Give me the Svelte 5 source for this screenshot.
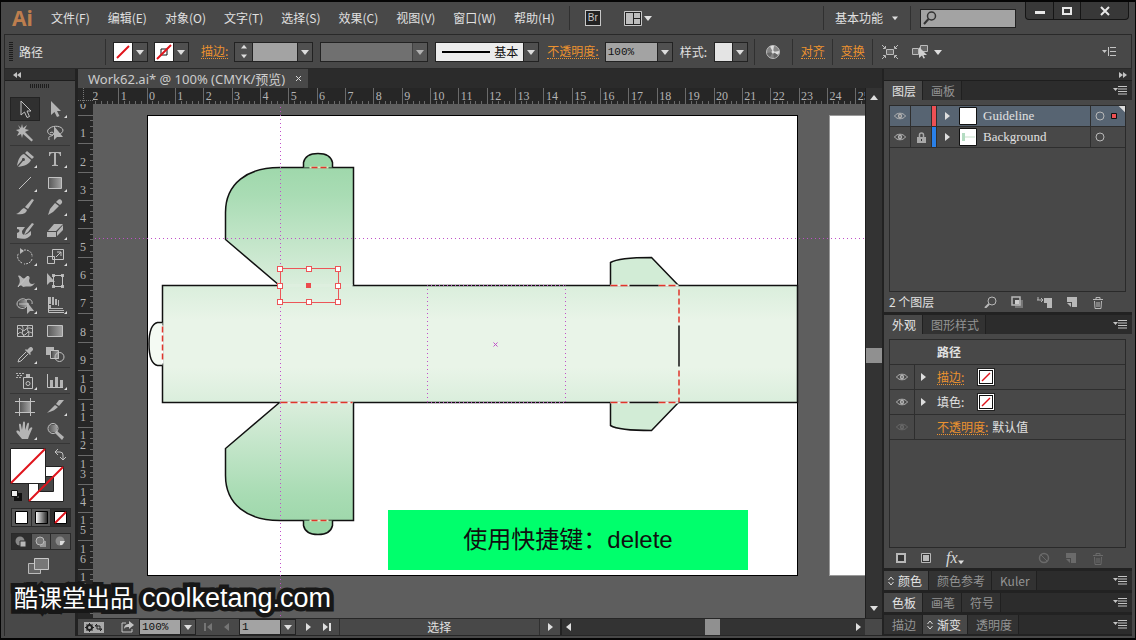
<script>
	const menus = ['文件(F)', '编辑(E)', '对象(O)', '文字(T)', '选择(S)', '效果(C)', '视图(V)', '窗口(W)', '帮助(H)'];

	// every icon lives in a 30x24 box: fill = solid shape, line = outline, more = has a flyout
	const toolGroups = [
		[
			{ name: '选择工具', line: 'M11 4v14l3.5-3 2.5 5.5 2.5-1-2.5-5.5h4z' },
			{ name: '直接选择工具', fill: 'M11 4v14l3.5-3 2.5 5 2.5-1-2.5-5h4z', more: true },
			{ name: '魔棒工具', fill: 'M12 3l1 4 4-3-2 4 4 1-4 2 8 8-1.500 1.500-8.500-7.500-1 4-1-4-4 2 2-4-3-2 4-1-2-4 3 3z' },
			{ name: '套索工具', line: 'M13 14c-6 0-7-5-3-7 4-3 12-2 13 2 0 2-2 4-4 4M10 12c2-2 5 0 3 2s-5 0-4 5', fill: 'M14 5v14l3-3h6z' }
		],
		[
			{ name: '钢笔工具', fill: 'M17 4l7 6-2 2-7-6zM14 7l7 6c-2 4-6 6-13 7l5-6a1.500 1.500 0 1 0-1-1l-5 6c1-6 3-11 7-12z', more: true },
			{ name: '文字工具', fill: 'M9 5h12v4h-1c0-2-1-3-3-3h-1v11c0 1 1 1 2 1v1h-6v-1c1 0 2 0 2-1V6h-1c-2 0-3 1-3 3H9z', more: true },
			{ name: '直线段工具', line: 'M9 18L21 6', more: true },
			{ name: '矩形工具', line: 'M8.500 6.500h13v11h-13z', shade: 'M9 7h12v10H9z', more: true },
			{ name: '画笔工具', fill: 'M22 4l2 1-6 9-3-2zM14 13l3 2c-1 4-5 5-11 4 4-1 5-5 8-6z' },
			{ name: '铅笔工具', fill: 'M18 5c2-2 5 1 4 3l-2 2-4-3zM15 8l4 3-6 6-5 3 2-6z', more: true },
			{ name: '斑点画笔工具', fill: 'M22 4l2 1-6 8-4 3 2-5zM7 8h8l-3 4c0 3 1 5 5 3l4-3v4c-4 5-9 4-14 3v-5l2-1c1-2 0-3-2-3z' },
			{ name: '橡皮擦工具', fill: 'M14 5h9l-7 7H8zM23 6v5l-6 6v-4zM7 13h9v5H7z', more: true }
		],
		[
			{ name: '旋转工具', line: 'M11 6c6-3 12 1 11 6M22 14c-1 4-5 5-8 5M12 18c-4-2-6-7-3-10', dash: true, fill: 'M10 3l4 3-4 3z', more: true },
			{ name: '比例缩放工具', line: 'M12.500 4.500h11v10h-11zM7.500 11.500h7v7h-7zM16 12l5-5m-4 0h4v4', more: true },
			{ name: '变形工具', fill: 'M8 7c3-2 4 4 7 2 3-4 6-1 4 2 0 4 3 5 6 3-4 6-8 2-12 4-2-3-5-1-6 0 3-3 4-7 1-11z', line: 'M8 18l10-11', more: true },
			{ name: '自由变换工具', line: 'M13.500 6.500h9v11h-9z', fill: 'M7 4v12l3-3h5zM12 5h3v3h-3zM21 5h3v3h-3zM21 16h3v3h-3zM12 16h3v3h-3z' },
			{ name: '形状生成器工具', line: 'M16 14c-3 3-9 1-9-3s6-7 9-4c3-2 7 0 6 4M9 11h10', shade: 'M9 7h8v7H9z', fill: 'M17 9v12l3-3h4z', more: true },
			{ name: '透视网格工具', fill: 'M8 4h3v7H8zM12 4h2v8h-2zM15 6h2v6h-2zM18 7h1v6h-1zM8 12h3v3h12v1H8zM8 17h16v1H8z', line: 'M8.500 4v15.500H24', more: true }
		],
		[
			{ name: '网格工具', line: 'M7.500 6.500h15v11h-15zM8 10c3-3 4 4 7 1s5-2 8-1M8 15c4-5 5 4 8 0s4-1 7-1M12 7c3 4-2 6 2 10M18 7c-3 4 3 6 0 10' },
			{ name: '渐变工具', line: 'M7.500 6.500h15v11h-15z', shade: 'M8 7h14v10H8z' },
			{ name: '吸管工具', fill: 'M19 5c2-3 6 1 3 3l-2 2 1 1-1 1-5-5 1-1 1 1z', line: 'M16 9l-7 7-1 3 3-1 7-7', more: true },
			{ name: '混合工具', fill: 'M6 4h8v3h-3v5H6z', shade: 'M12 8h7v8h-7z', line: 'M10.500 7.500h8v8h-8zM15 14a4.500 4.500 0 1 0 9 0a4.500 4.500 0 1 0-9 0' }
		],
		[
			{ name: '符号喷枪工具', line: 'M13.500 8.500h9v11h-9zM16 14.500a2 2 0 1 0 4 0a2 2 0 1 0-4 0', fill: 'M16 5h4v3h-4zM6 4h2v1H6zM9 4h2v1H9zM12 4h2v1h-2zM7 6h2v1H7zM10 6h2v1h-2zM6 8h2v1H6zM9 8h2v1H9z', more: true },
			{ name: '柱形图工具', line: 'M7.500 5v13.500H23', fill: 'M10 11h3v7h-3zM15 8h3v10h-3zM20 11h3v7h-3z', more: true }
		],
		[
			{ name: '画板工具', line: 'M9.500 3v18M20.500 3v18M5 6.500h20M5 17.500h20', shade: 'M10 7h10v10H10z' },
			{ name: '切片工具', fill: 'M19 5h5l-5 6-3-2zM15 10l3 2c-4 4-6 4-11 6z', more: true },
			{ name: '抓手工具', fill: 'M12 20l-5-6c-2-3 1-3 3-1L9 6c0-2 2-1 2 0l1 5 1-7c0-2 2-2 2 0v7l2-6c1-2 2-1 2 0l-1 7 2-3c2-2 3 0 2 1l-3 7-1 3z', more: true },
			{ name: '缩放工具', fill: 'M17 12l7 6-2 3-7-7z', line: 'M8 9.500a5 5 0 1 0 10 0a5 5 0 1 0-10 0', shade: 'M9 6h8v7H9z' }
		]
	];

	const layers = [
		{ name: 'Guideline', color: '#ee5054', selected: true, locked: false },
		{ name: 'Background', color: '#2a80e8', selected: false, locked: true }
	];

	const collapsed = [
		{ tabs: ['颜色', '颜色参考', 'Kuler'], active: 0, diamond: true },
		{ tabs: ['色板', '画笔', '符号'], active: 0, diamond: false },
		{ tabs: ['描边', '渐变', '透明度'], active: 1, diamond: true }
	];

	// 1cm at 100%
	const unit = 28.35;
	const minor = [1, 2, 3, 4];

	const vScroll = 49;
	const hScroll = 49;

	const handles = [[133, 153], [162, 153], [191, 153], [133, 170], [191, 170], [133, 186], [162, 186], [191, 186]];

	let rulerWidth = $state(772);
	let rulerHeight = $state(515);
	let tool = $state('选择工具');
	let stroke = $state('');
	let opacity = $state('100%');
	let search = $state('');

	const range = (from, to) => Array.from({ length: to - from + 1 }, (_, i) => i + from);
	const across = $derived(range(-2, Math.floor((rulerWidth - 60) / unit)));
	const down = $derived(range(0, Math.floor(rulerHeight / unit) - 1));
</script>

{#snippet tri(dir)}
	<svg class="tri {dir}" width="8" height="8" viewBox="0 0 8 8"><path d="M0 2h8L4 7z" /></svg>
{/snippet}

{#snippet none(size)}
	<svg width={size} height={size} viewBox="0 0 18 18">
		<path d="M0 0h18v18H0z" fill="#fff" /><path d="M3 15L15 3" stroke="#e0131b" stroke-width="2" />
	</svg>
{/snippet}

{#snippet panelMenu()}
	<button class="bare" aria-label="面板菜单">
		<svg width="14" height="9" viewBox="0 0 14 9"><path d="M0 2h5L2.500 5z" fill="#c4c4c4" /><path d="M5 .5h9M5 3h9M5 5.500h9M5 8h9" stroke="#c4c4c4" /></svg>
	</button>
{/snippet}

{#snippet tabs(names, active, diamond)}
	<div class="tabs">
		{#each names as name, i}
			<button class="tab" class:on={i === active} class:tight={i === active && diamond}>
				{#if i === active && diamond}
					<svg width="6" height="10" viewBox="0 0 6 10"><path d="M.5 4L3 1l2.500 3M.5 6L3 9l2.500-3" fill="none" stroke="#ddd" /></svg>
				{/if}
				{name}
			</button>
		{/each}
		<span class="grow"></span>
		{@render panelMenu()}
	</div>
{/snippet}

{#snippet eye()}
	<svg width="12" height="8" viewBox="0 0 12 8">
		<path d="M.5 4C3 .3 9 .3 11.500 4 9 7.700 3 7.700.5 4z" fill="none" stroke="#b4b4b4" />
		<circle cx="6" cy="4" r="2.200" fill="#b4b4b4" /><circle cx="6" cy="4" r=".8" fill="#444" />
	</svg>
{/snippet}

{#snippet trash()}
	<svg width="12" height="13" viewBox="0 0 12 13"><path d="M1 3.500h10M4 3V1.500h4V3M2.500 5l.5 7.500h6L9.500 5M5 6v5M7 6v5" fill="none" stroke="currentColor" /></svg>
{/snippet}

{#snippet sheet()}
	<svg width="12" height="12" viewBox="0 0 12 12"><path d="M1 1h10v10H6V6H1z" fill="currentColor" /><path d="M1 7h4v4z" fill="currentColor" /></svg>
{/snippet}

<div class="app">
	<header class="menubar">
		<span class="logo">Ai</span>
		<nav>
			{#each menus as m}
				<button class="bare">{m}</button>
			{/each}
		</nav>
		<span class="rule"></span>
		<button class="bridge">Br</button>
		<button class="bare arrange" aria-label="排列文档">
			<svg width="18" height="15" viewBox="0 0 18 15"><path d="M.5.5h17v14H.5z" fill="#222" stroke="#c8c8c8" /><path d="M2 2h7v11H2zM10 2h6v5h-6zM10 8h6v5h-6z" fill="#bdbdbd" /></svg>
			{@render tri('down')}
		</button>
		<span class="grow"></span>
		<span class="rule"></span>
		<button class="bare workspace">基本功能 <span class="small">{@render tri('down')}</span></button>
		<span class="rule"></span>
		<label class="search">
			<svg width="14" height="14" viewBox="0 0 14 14"><circle cx="8.500" cy="5" r="4" fill="none" stroke="#333" stroke-width="1.500" /><path d="M5.500 8L1 13" stroke="#333" stroke-width="2" /></svg>
			<input type="search" aria-label="搜索" bind:value={search} />
		</label>
		<div class="winbuttons">
			<button aria-label="最小化"><svg width="10" height="10"><path d="M0 5h10v3H0z" fill="#e8e8e8" /></svg></button>
			<button aria-label="最大化"><svg width="10" height="10"><path d="M1 2h8v6H1z" fill="none" stroke="#e8e8e8" stroke-width="2" /></svg></button>
			<button class="wide" aria-label="关闭"><svg width="10" height="10"><path d="M1 1l8 8M9 1L1 9" stroke="#e8e8e8" stroke-width="2" /></svg></button>
		</div>
	</header>

	<div class="control">
		<span class="grip"></span>
		<span class="kind">路径</span>
		<span class="rule"></span>
		<button class="swatch first" aria-label="填色">{@render none(18)}<i>{@render tri('down')}</i></button>
		<button class="swatch" aria-label="描边颜色">
			<svg width="18" height="18" viewBox="0 0 18 18"><path d="M0 0h18v18H0z" fill="#fff" /><path d="M6 6h6v6H6z" fill="none" stroke="#111" /><path d="M2 16L16 2" stroke="#e0131b" stroke-width="2" /></svg>
			<i>{@render tri('down')}</i>
		</button>
		<label class="link" for="stroke">描边:</label>
		<div class="combo weight">
			<button class="step" aria-label="调整粗细">
				<span>{@render tri('up')}</span><span>{@render tri('down')}</span>
			</button>
			<input id="stroke" bind:value={stroke} />
			<button class="drop" aria-label="粗细列表">{@render tri('down')}</button>
		</div>
		<div class="pick profile off">
			<select aria-label="宽度配置" disabled><option></option></select>
			<i>{@render tri('down')}</i>
		</div>
		<div class="pick brush">
			<svg width="48" height="4"><path d="M0 1h48v2H0z" /></svg>
			<select aria-label="画笔定义"><option>基本</option></select>
			<i>{@render tri('down')}</i>
		</div>
		<label class="link" for="opacity">不透明度:</label>
		<div class="combo opacity">
			<input id="opacity" bind:value={opacity} />
			<button class="drop" aria-label="不透明度列表">{@render tri('down')}</button>
		</div>
		<span class="stylelabel">样式:</span>
		<button class="swatch" aria-label="图形样式"><b></b><i>{@render tri('down')}</i></button>
		<span class="rule"></span>
		<button class="bare wheel" aria-label="重新着色图稿">
			<svg width="14" height="14" viewBox="0 0 14 14"><circle cx="7" cy="7" r="6.500" fill="#858585" stroke="#bbb" /><path d="M7 7L4 1.500A6 6 0 0 1 8 1zM7 7l6-1a6 6 0 0 1-1 4z" fill="#ddd" /><path d="M7 7l-6 1a6 6 0 0 0 3 4zM7 7l1 6a6 6 0 0 0 4-3z" fill="#666" /><circle cx="7" cy="7" r="1.500" fill="#ddd" /></svg>
		</button>
		<span class="rule"></span>
		<button class="link">对齐</button>
		<span class="rule"></span>
		<button class="link">变换</button>
		<span class="rule"></span>
		<button class="bare isolate" aria-label="隔离选中的对象">
			<svg width="16" height="14" viewBox="0 0 16 14"><path d="M4.500 4.500h7v5h-7z" fill="#666" stroke="#bbb" /><path d="M0 0l3 3M16 0l-3 3M0 14l3-3M16 14l-3-3M1 3.500h2.500V1M12.500 1v2.500H15M1 10.500h2.500V13M12.500 13v-2.500H15" fill="none" stroke="#bbb" /></svg>
		</button>
		<button class="bare similar" aria-label="选择类似的对象">
			<svg width="17" height="14" viewBox="0 0 17 14"><path d="M.5 3.500h6v6h-6zM8.500.5h7v6h-7z" fill="#666" stroke="#bbb" /><path d="M7 2v11l3-2.500 1.500 3L13 13l-1.500-3H15z" fill="#d0d0d0" /></svg>
			{@render tri('down')}
		</button>
		<span class="grow"></span>
		<button class="bare end" aria-label="控制面板菜单">
			<svg width="14" height="9" viewBox="0 0 14 9"><path d="M0 3h5L2.500 6zM6 0h1v9H6z" fill="#c4c4c4" /><path d="M8 .5h6M8 4.500h6M8 8.500h6" stroke="#c4c4c4" /></svg>
		</button>
	</div>

	<main>
		<aside class="tools">
			<div class="strip"><svg width="8" height="6"><path d="M4 0v6L0 3zM8 0v6L4 3z" fill="#c4c4c4" /></svg></div>
			<div class="grip flat"></div>
			{#each toolGroups as group}
				<div class="group">
					{#each group as t}
						<button class="tool" class:on={t.name === tool} aria-label={t.name} onclick={() => (tool = t.name)}>
							<svg width="30" height="24" viewBox="0 0 30 24">
								{#if t.shade}<path d={t.shade} fill="url(#shade)" />{/if}
								{#if t.fill}<path d={t.fill} fill="#b4b4b4" />{/if}
								{#if t.line}<path d={t.line} fill="none" stroke="#c2c2c2" stroke-dasharray={t.dash ? '2 1' : null} />{/if}
								{#if t.more}<path d="M27 18v3h-3z" fill="#ddd" />{/if}
							</svg>
						</button>
					{/each}
				</div>
			{/each}
			<div class="group colors">
				<svg width="60" height="58" viewBox="0 0 60 58">
					<defs>
						<linearGradient id="shade"><stop offset="0" stop-color="#5a5a5a" /><stop offset="1" stop-color="#a0a0a0" /></linearGradient>
						<linearGradient id="bw"><stop offset="0" stop-color="#fff" /><stop offset="1" stop-color="#222" /></linearGradient>
					</defs>
					<path d="M18.500 20.500h35v35h-35z" fill="#fff" stroke="#222" /><path d="M28.500 30.500h15v15h-15z" fill="#484848" stroke="#222" />
					<path d="M19 55L53 21" stroke="#e0131b" stroke-width="2" />
					<path d="M.5 2.500h35v35H.5z" fill="#fff" stroke="#222" /><path d="M1 37L35 3" stroke="#e0131b" stroke-width="2" />
					<path d="M46 6h4q3 0 3 3v4M48 3l-3 3 3 3M50 11l3 3 3-3" fill="none" stroke="#c2c2c2" />
					<path d="M5.500 48.500h5v5h-5z" fill="none" stroke="#111" stroke-width="3" /><path d="M1.500 44.500h6v6h-6z" fill="#eee" stroke="#111" />
				</svg>
			</div>
			<div class="modes">
				<button aria-label="颜色"><svg width="13" height="13"><path d="M.5.5h12v12H.5z" fill="#fff" stroke="#000" /></svg></button>
				<button aria-label="渐变"><svg width="13" height="13"><path d="M.5.5h12v12H.5z" fill="url(#bw)" stroke="#000" /></svg></button>
				<button class="on" aria-label="无"><svg width="13" height="13"><path d="M.5.5h12v12H.5z" fill="#fff" stroke="#000" /><path d="M1 12L12 1" stroke="#e0131b" stroke-width="2" /></svg></button>
			</div>
			<div class="modes draw">
				<button class="on" aria-label="正常绘图"><svg width="12" height="11"><circle cx="5" cy="5" r="4.500" fill="#888" /><path d="M5 5h6v6H5z" fill="#b8b8b8" stroke="#333" /></svg></button>
				<button aria-label="背面绘图"><svg width="12" height="11"><path d="M5 5h6v6H5z" fill="#999" /><circle cx="5" cy="5" r="4" fill="#777" stroke="#bbb" /></svg></button>
				<button aria-label="内部绘图"><svg width="12" height="11"><circle cx="5" cy="5" r="4.500" fill="#8a8a8a" /><path d="M5 5h5l-3 4H5z" fill="#ddd" /></svg></button>
			</div>
			<button class="bare screen" aria-label="更改屏幕模式">
				<svg width="22" height="17"><path d="M.5 5.500h12v10H.5z" fill="#666" stroke="#bbb" /><path d="M6.500.5h14v11h-14z" fill="#777" stroke="#c8c8c8" /></svg>
			</button>
		</aside>

		<section class="doc">
			<div class="doctabs">
				<div class="doctab">Work62.ai* @ 100% (CMYK/预览)<button class="bare" aria-label="关闭文档"><svg width="7" height="7"><path d="M1 1l5 5M6 1L1 6" stroke="#d8d8d8" /></svg></button></div>
			</div>
			<div class="view">
				<div class="corner"><svg width="15" height="16"><path d="M0 12.500h15M5.500 0v16" stroke="#777" stroke-dasharray="1 1" /></svg></div>
				<div class="ruler" bind:clientWidth={rulerWidth}>
					<svg width="100%" height="100%">
						<g transform="translate(54 0)">
							{#each across as n}
								<path d="M{n * unit} 0v16" />
								{#each minor as k}
									<path d="M{(n + k / 5) * unit} 13v3" />
								{/each}
								<text x={n * unit + 2} y="12">{Math.abs(n)}</text>
							{/each}
						</g>
					</svg>
				</div>
				<div class="ruler side" bind:clientHeight={rulerHeight}>
					<svg width="100%" height="100%">
						<g transform="translate(0 11)">
							{#each down as n}
								<path d="M0 {n * unit + 0.5}h15" />
								{#each minor as k}
									<path d="M12 {(n + k / 5) * unit}h3" />
								{/each}
								{#each String(n).split('').reverse() as digit, i}
									<text x="2" y={n * unit - 6 - i * 10}>{digit}</text>
								{/each}
							{/each}
						</g>
					</svg>
				</div>
				<div class="canvas">
					<svg width="100%" height="100%">
						<defs>
							<linearGradient id="body" x2="0" y2="1">
								<stop offset="0" stop-color="#daeedc" /><stop offset=".3" stop-color="#e9f4e8" />
								<stop offset=".7" stop-color="#e9f4e8" /><stop offset="1" stop-color="#daeedc" />
							</linearGradient>
							<linearGradient id="wing" gradientUnits="userSpaceOnUse" x1="0" y1="38" x2="0" y2="176">
								<stop offset="0" stop-color="#9ad6a7" /><stop offset=".3" stop-color="#a9dcb4" /><stop offset="1" stop-color="#deefdf" />
							</linearGradient>
						</defs>
						<g transform="translate(54.500 11.500)" fill="none" stroke="#111">
							<rect width="650" height="460" fill="#fff" stroke="#000" />
							<rect x="682" width="650" height="460" fill="#fff" stroke="#999" />
							<rect x="15" y="170" width="635" height="117" fill="url(#body)" stroke-width="1.500" />
							{#each ['', 'translate(0 457) scale(1 -1)'] as flip}
								<g transform={flip} stroke-width="1.500">
									<path d="M132 170L78 124V97C78 68 100 52 132 52H206V170" fill="url(#wing)" />
									<path d="M156 52V47Q158 38 170.500 38T185 47V52" fill="#9ad6a7" />
									<path d="M162 52h19" stroke="#d9ecc0" stroke-width="2" />
									<path d="M164 52h15" stroke="#e0352b" stroke-dasharray="6 3" />
									<path d="M463 170V147Q471 142 504 142L531 170" fill="#d2ecd6" />
									<path d="M463 170h68" stroke="#eef6ec" stroke-width="2" />
									<path d="M463 170h20M511 170h20" stroke="#e0352b" stroke-dasharray="7 3" />
									<path d="M482 170h29" />
								</g>
							{/each}
							<path d="M133 170h72" stroke="#deefdf" stroke-width="3" />
							<path d="M133 287h72" stroke="#eef6ec" stroke-width="2" />
							<path d="M133 287h72" stroke="#e0352b" stroke-width="1.500" stroke-dasharray="7 3" />
							<path d="M15 207h-5Q1.500 209 1.500 228.500T10 250h5" fill="#f4faf3" stroke-width="1.500" />
							<path d="M15 210v38" stroke="#fff" stroke-width="2" />
							<path d="M15 211v36" stroke="#e0352b" stroke-width="1.500" stroke-dasharray="6 3" />
							<path d="M531.500 210v41" stroke-width="1.500" />
							<path d="M531.500 174v34M531.500 255v32" stroke="#e0352b" stroke-width="1.500" stroke-dasharray="6 3" />

							<g stroke="#c050c8" stroke-dasharray="1 3" stroke-dashoffset=".5">
								<path d="M133-12V600M-60 123H1400M280 170V287M418 170V287M280 170H418M280 287H418" />
								<path d="M346 227l4 4m0-4l-4 4" stroke-dasharray="none" />
							</g>
							<rect x="133" y="153" width="58" height="34" stroke="#ec5558" />
							<rect x="158.500" y="167.500" width="5" height="5" fill="#ec4a4d" stroke="none" />
							{#each handles as [x, y]}
								<rect x={x - 3} y={y - 2} width="5" height="5" fill="#fff" stroke="#ec5558" />
							{/each}
						</g>
					</svg>
					<p class="caption">使用快捷键：delete</p>
				</div>
				<div class="vscroll">
					<button class="bare" aria-label="向上滚动">{@render tri('up')}</button>
					<div class="track"><div style="flex-basis: {vScroll}%"></div><b></b></div>
					<button class="bare" aria-label="向下滚动">{@render tri('down')}</button>
				</div>
			</div>
			<div class="status">
				<button class="bare sync" aria-label="同步设置">
					<svg width="20" height="11"><path d="M0 0h20v11H0z" fill="#aaa" /><circle cx="5.500" cy="5.500" r="2.500" fill="none" stroke="#222" stroke-width="2" /><path d="M5.500 1v9M1 5.500h9M2.500 2.500l6 6M8.500 2.500l-6 6" stroke="#222" /><circle cx="5.500" cy="5.500" r="1.500" fill="#aaa" /><path d="M11 4h5v4M18 7h-5V3M11 4l2-2M18 7l-2 2" fill="none" stroke="#222" /></svg>
				</button>
				<button class="bare share" aria-label="共享">
					<svg width="13" height="12"><path d="M5 2H1v9h10V8" fill="none" stroke="#c2c2c2" /><path d="M3 8c0-4 3-5 5-5V0l5 4-5 4V6C6 6 4 6 3 8z" fill="#c2c2c2" /></svg>
				</button>
				<div class="combo zoom"><input aria-label="缩放" value="100%" /><button class="drop" aria-label="缩放列表">{@render tri('down')}</button></div>
				<div class="steps dim"><button class="bare" aria-label="首项"><b></b>{@render tri('left')}</button><button class="bare" aria-label="上一项">{@render tri('left')}</button></div>
				<div class="combo zoom"><input aria-label="画板" value="1" /><button class="drop" aria-label="画板列表">{@render tri('down')}</button></div>
				<div class="steps"><button class="bare" aria-label="下一项">{@render tri('right')}</button><button class="bare" aria-label="末项">{@render tri('right')}<b></b></button></div>
				<span class="current">选择</span>
				<button class="bare next" aria-label="状态栏菜单">{@render tri('right')}</button>
				<div class="hscroll">
					<button class="bare" aria-label="向左滚动">{@render tri('left')}</button>
					<div class="track"><div style="flex-basis: {hScroll}%"></div><b></b></div>
					<button class="bare" aria-label="向右滚动">{@render tri('right')}</button>
				</div>
			</div>
		</section>

		<aside class="dock">
			<div class="strip right"><svg width="8" height="6"><path d="M0 0v6l4-3zM4 0v6l4-3z" fill="#c4c4c4" /></svg></div>
			<section class="panel layers">
				{@render tabs(['图层', '画板'], 0, false)}
				<ul class="list">
					{#each layers as l}
						<li class:selected={l.selected}>
							<button class="bare" aria-label="切换可视性">{@render eye()}</button>
							<span class="cell">
								{#if l.locked}
									<svg width="9" height="11"><path d="M2.500 5V3a2 2 0 0 1 4 0v2" fill="none" stroke="#a8a8a8" stroke-width="1.500" /><path d="M0 5h9v6H0z" fill="#a8a8a8" /><path d="M4 7h1v2H4z" fill="#333" /></svg>
								{/if}
							</span>
							<i style="background: {l.color}"></i>
							<button class="bare" aria-label="展开">{@render tri('right')}</button>
							<svg width="18" height="18"><path d="M.5.5h17v17H.5z" fill="#fff" stroke="#111" />{#if l.locked}<path d="M3 5h3v8H3z" fill="#b4dcc2" /><path d="M6 8h10v2H6z" fill="#e2f0e4" />{/if}</svg>
							<span class="name">{l.name}</span>
							<span class="target">
								<svg width="10" height="10"><circle cx="5" cy="5" r="4" fill="none" stroke="#b8b8b8" /></svg>
								{#if l.selected}<svg width="6" height="6"><path d="M.5.5h5v5h-5z" fill="#ee5054" stroke="#111" /></svg>{/if}
							</span>
						</li>
					{/each}
				</ul>
				<footer>
					<span class="count">2 个图层</span>
					<button class="bare" aria-label="定位对象"><svg width="13" height="12"><circle cx="8" cy="5" r="4" fill="none" stroke="#b8b8b8" /><path d="M5 8l-4 4" stroke="#b8b8b8" stroke-width="2" /></svg></button>
					<button class="bare" aria-label="建立剪切蒙版"><svg width="12" height="12"><path d="M4 4h8v8H4z" fill="#777" /><path d="M1 1h8v8H1z" fill="none" stroke="#b8b8b8" stroke-width="1.500" /><path d="M4 4h4v4H4z" fill="#ccc" /></svg></button>
					<button class="bare" aria-label="创建新子图层"><svg width="15" height="11"><path d="M0 3h6M1 0v3M4 1l2 2-2 2" fill="none" stroke="#b8b8b8" /><path d="M7 1h8v10h-5V6H7z" fill="#b8b8b8" /></svg></button>
					<button class="bare" aria-label="创建新图层">{@render sheet()}</button>
					<button class="bare" aria-label="删除所选图层">{@render trash()}</button>
				</footer>
			</section>
			<section class="panel look">
				{@render tabs(['外观', '图形样式'], 0, false)}
				<ul class="list">
					<li><strong>路径</strong></li>
					<li>
						<button class="bare" aria-label="切换可视性">{@render eye()}</button>
						<span class="open">{@render tri('right')}</span>
						<button class="link">描边:</button>
						<span class="chip">{@render none(12)}</span>
					</li>
					<li>
						<button class="bare" aria-label="切换可视性">{@render eye()}</button>
						<span class="open">{@render tri('right')}</span>
						<span>填色:</span>
						<span class="chip">{@render none(12)}</span>
					</li>
					<li>
						<button class="bare faint" aria-label="切换可视性">{@render eye()}</button>
						<span class="open"></span>
						<button class="link">不透明度:</button>
						<span class="value">默认值</span>
					</li>
				</ul>
				<footer>
					<button class="bare" aria-label="添加新描边"><svg width="10" height="10"><path d="M1 1h8v8H1z" fill="#333" stroke="#b8b8b8" stroke-width="2" /></svg></button>
					<button class="bare" aria-label="添加新填色"><svg width="10" height="10"><path d="M.5.5h9v9h-9z" fill="#333" stroke="#b8b8b8" /><path d="M2 2h6v6H2z" fill="#b8b8b8" /></svg></button>
					<button class="bare fx"><em>fx</em><span class="small">{@render tri('down')}</span></button>
					<span class="grow"></span>
					<button class="bare dim" aria-label="清除外观"><svg width="12" height="12"><circle cx="6" cy="6" r="4.500" fill="none" stroke="currentColor" stroke-width="1.500" /><path d="M3 3l6 6" stroke="currentColor" /></svg></button>
					<button class="bare dim" aria-label="复制所选项目">{@render sheet()}</button>
					<button class="bare dim" aria-label="删除所选项目">{@render trash()}</button>
				</footer>
			</section>
			{#each collapsed as c}
				<section class="panel">{@render tabs(c.tabs, c.active, c.diamond)}</section>
			{/each}
		</aside>
	</main>

	<div class="watermark">酷课堂出品<span>coolketang.com</span></div>
</div>

<style>
	:global(body) {
		margin: 0;
		background: #000;
	}

	* {
		box-sizing: border-box;
	}

	.app {
		position: relative;
		display: flex;
		flex-direction: column;
		height: 100vh;
		overflow: hidden;
		border: solid #050505;
		border-width: 2px 1px;
		background: #484848;
		color: #e0e0e0;
		font: 12px/16px 'Noto Sans CJK SC', sans-serif;
	}

	button,
	input,
	select {
		margin: 0;
		padding: 0;
		border: 0;
		border-radius: 0;
		background: none;
		color: inherit;
		font: inherit;
	}

	svg {
		display: block;
		flex: none;
	}

	.bare {
		display: flex;
		align-items: center;
		justify-content: center;
		white-space: nowrap;
	}

	.grow {
		flex: 1;
	}

	.rule {
		width: 1px;
		height: 24px;
		background: #303030;
	}

	.tri {
		fill: #dedede;
	}
	.up {
		transform: rotate(180deg);
	}
	.left {
		transform: rotate(90deg);
	}
	.right.tri {
		transform: rotate(-90deg);
	}
	.small .tri,
	.step .tri {
		width: 6px;
		height: 6px;
	}

	.link {
		color: #ec922f;
		line-height: 14px;
		border-bottom: 1px dotted #ec922f;
		white-space: nowrap;
	}

	/* top bar */
	.menubar {
		display: flex;
		align-items: center;
		flex: none;
		height: 32px;
	}
	.logo {
		width: 39px;
		margin-left: 11px;
		color: #bd7e4e;
		font: 700 21px/30px 'Noto Sans', sans-serif;
	}
	nav {
		display: flex;
		gap: 18px;
		margin-right: 14px;
	}
	.bridge {
		width: 16px;
		height: 16px;
		margin: 0 23px 0 15px;
		border: 1px solid #c8c8c8;
		background: #222;
		color: #c8c8c8;
		font: 10px/12px 'Liberation Sans', sans-serif;
	}
	.arrange {
		gap: 2px;
	}
	.workspace {
		gap: 9px;
		margin: 0 12px 0 11px;
	}
	.search {
		display: flex;
		align-items: center;
		width: 96px;
		height: 19px;
		margin: 0 9px;
		padding-left: 2px;
		border: 1px solid #222;
		background: #a3a3a3;
	}
	.search input {
		width: 76px;
		outline: none;
	}
	.winbuttons {
		display: flex;
		align-self: flex-start;
		height: 18px;
		margin-right: 6px;
		border: 1px solid #151515;
		border-top: 0;
		border-radius: 0 0 4px 4px;
		background: #383838;
	}
	.winbuttons button {
		display: grid;
		place-items: center;
		width: 27px;
	}
	.winbuttons button + button {
		border-left: 1px solid #151515;
	}
	.winbuttons .wide {
		width: 48px;
	}

	/* control panel */
	.control {
		display: flex;
		align-items: center;
		flex: none;
		height: 35px;
		margin: 0 3px;
		border: 1px solid #292929;
	}
	.grip {
		width: 4px;
		height: 20px;
		margin: 0 6px 0 4px;
		background: repeating-linear-gradient(#1d1d1d 0 1px, transparent 1px 2px);
	}
	.kind {
		width: 86px;
	}
	.swatch {
		display: flex;
		height: 20px;
		border: 1px solid #222;
		margin-right: 6px;
	}
	.swatch b {
		width: 17px;
		background: #e4e4e4;
	}
	.first {
		margin-left: 7px;
	}
	.swatch i,
	.pick i,
	.drop {
		display: grid;
		place-items: center;
		width: 15px;
		height: 100%;
		border-left: 1px solid #222;
		background: #505050;
	}
	.swatch + .link {
		margin-left: 6px;
	}
	.combo,
	.pick {
		display: flex;
		align-items: center;
		height: 20px;
		border: 1px solid #222;
		background: #a3a3a3;
		color: #111;
	}
	.combo input {
		flex: 1;
		width: 0;
		height: 100%;
		padding-left: 2px;
		outline: none;
		font: 11px/14px 'Liberation Mono', monospace;
	}
	.weight {
		width: 79px;
		margin: 0 7px 0 6px;
	}
	.step {
		width: 18px;
		height: 100%;
		border-right: 1px solid #222;
		background: #505050;
	}
	.step span {
		display: grid;
		place-items: center;
		height: 9px;
	}
	.pick select {
		flex: 1;
		min-width: 0;
		height: 100%;
		appearance: none;
		text-align: right;
		padding-right: 5px;
	}
	.profile {
		width: 108px;
		margin-right: 7px;
		background: #707070;
	}
	.off i {
		background: #484848;
		opacity: 0.6;
	}
	.brush {
		width: 104px;
		margin-right: 8px;
		padding-left: 6px;
		background: #ececec;
	}
	.opacity {
		width: 68px;
		margin: 0 7px 0 6px;
	}
	.stylelabel {
		width: 34px;
	}
	.wheel {
		width: 37px;
	}
	.control > .rule {
		height: 26px;
	}
	.control > .rule + .link {
		margin: 0 7px 0 8px;
	}
	.isolate {
		margin: 0 14px 0 9px;
	}
	.similar {
		gap: 5px;
	}
	.end {
		margin-right: 15px;
	}

	main {
		display: flex;
		flex: 1;
		min-height: 0;
		margin: 0 3px 2px;
		background: #222;
	}

	.strip {
		display: flex;
		align-items: center;
		flex: none;
		height: 12px;
		padding: 0 8px;
		border-bottom: 1px solid #1e1e1e;
		background: #303030;
	}
	.strip.right {
		justify-content: flex-end;
		padding: 0 5px;
	}

	/* toolbox */
	.tools {
		display: flex;
		flex-direction: column;
		flex: none;
		width: 71px;
		margin-right: 3px;
		border-left: 1px solid #2a2a2a;
		background: #484848;
	}
	.grip.flat {
		width: 20px;
		height: 4px;
		margin: 3px 0 9px 25px;
		background: repeating-linear-gradient(90deg, #1d1d1d 0 1px, transparent 1px 2px);
	}
	.group {
		display: flex;
		flex-wrap: wrap;
		width: 60px;
		margin-left: 5px;
	}
	.group + .group {
		padding-top: 1px;
		border-top: 1px solid #363636;
	}
	.tool {
		width: 30px;
		height: 24px;
	}
	.tool.on {
		background: #303030;
		box-shadow: inset 0 0 0 1px #232323;
	}
	.group.colors {
		padding-top: 2px;
	}
	.modes {
		display: flex;
		flex: none;
		width: 60px;
		height: 19px;
		margin: 4px 0 0 6px;
		border: 1px solid #2a2a2a;
	}
	.modes button {
		display: grid;
		flex: 1;
		place-items: center;
		background: #585858;
	}
	.modes button + button {
		border-left: 1px solid #2a2a2a;
	}
	.modes .on {
		background: #2e2e2e;
	}
	.draw {
		height: 17px;
		margin-top: 6px;
	}
	.screen {
		margin: 8px 0 0 23px;
		align-self: flex-start;
	}

	/* document window */
	.doc {
		display: flex;
		flex: 1;
		flex-direction: column;
		min-width: 0;
		margin-right: 2px;
	}
	.doctabs {
		display: flex;
		flex: none;
		height: 19px;
		background: #2b2b2b;
	}
	.doctab {
		display: flex;
		align-items: center;
		gap: 10px;
		padding: 0 6px 0 10px;
		background: #484848;
		color: #ccc;
		font: 13px/18px 'Noto Sans', 'Noto Sans CJK SC', sans-serif;
		white-space: nowrap;
	}
	.view {
		display: grid;
		flex: 1;
		grid-template: 16px minmax(0, 1fr) / 15px minmax(0, 1fr) 17px;
		min-height: 0;
	}
	.corner {
		background: #262626;
	}
	.ruler {
		overflow: hidden;
		background: #262626;
		fill: #b4b4b4;
		font: 12px 'Liberation Serif', serif;
	}
	.ruler path {
		stroke: #6a6a6a;
		shape-rendering: crispEdges;
	}
	.side {
		grid-row: 2;
	}
	.canvas {
		position: relative;
		grid-row: 2;
		grid-column: 2;
		overflow: hidden;
		background: #5e5e5e;
	}
	.caption {
		position: absolute;
		top: 406px;
		left: 295px;
		width: 360px;
		margin: 0;
		background: #00ff6c;
		color: #101010;
		font: 24px/60px 'Liberation Sans', 'Noto Sans CJK SC', sans-serif;
		text-align: center;
	}
	.vscroll {
		display: flex;
		flex-direction: column;
		grid-row: 1 / 3;
		grid-column: 3;
		border-left: 1px solid #1e1e1e;
		background: #333;
	}
	.vscroll button {
		height: 20px;
	}
	.track {
		display: flex;
		flex: 1;
	}
	.vscroll .track {
		flex-direction: column;
	}
	.track b {
		flex: 0 0 15px;
		background: #909090;
	}
	.status {
		display: flex;
		align-items: center;
		flex: none;
		height: 18px;
		border: solid #262626;
		border-width: 1px 0;
		background: #484848;
	}
	.sync {
		margin: 0 17px 0 6px;
	}
	.share {
		width: 13px;
		margin-right: 5px;
	}
	.zoom {
		width: 57px;
		height: 16px;
	}
	.steps {
		display: flex;
		justify-content: space-evenly;
		width: 43px;
	}
	.steps b {
		width: 2px;
		height: 8px;
		background: #dedede;
	}
	.dim {
		opacity: 0.3;
	}
	.current {
		flex: 201;
		height: 100%;
		border: solid #303030;
		border-width: 0 1px;
		text-align: center;
	}
	.next {
		width: 20px;
	}
	.hscroll {
		display: flex;
		flex: 307;
		height: 100%;
		margin-right: 17px;
		border-left: 2px solid #222;
		background: #333;
	}
	.hscroll button {
		width: 15px;
	}
	.hscroll .track b {
		margin-left: -6px;
	}

	/* panels */
	.dock {
		display: flex;
		flex: none;
		flex-direction: column;
		gap: 3px;
		width: 248px;
		padding-bottom: 2px;
		background: #222;
	}
	.dock .strip {
		margin-bottom: -3px;
	}
	.panel {
		display: flex;
		flex-direction: column;
		flex: none;
		background: #484848;
	}
	.look {
		flex: 1;
		min-height: 0;
	}
	.tabs {
		display: flex;
		flex: none;
		height: 19px;
		padding-right: 5px;
		background: #2c2c2c;
	}
	.tab {
		display: flex;
		align-items: center;
		gap: 4px;
		padding: 0 6px 0 8px;
		border-right: 1px solid #202020;
		background: #323232;
		color: #949494;
		white-space: nowrap;
	}
	.tab.on {
		background: #484848;
		color: #e4e4e4;
	}
	.tab.tight {
		padding-left: 4px;
	}
	.list {
		flex: 1;
		margin: 5px 6px 0 5px;
		padding: 0;
		border: 1px solid #2a2a2a;
		list-style: none;
	}
	.list li {
		display: flex;
		align-items: center;
		border-bottom: 1px solid #2e2e2e;
	}
	.layers .list {
		flex: none;
		height: 187px;
	}
	.layers li {
		height: 21px;
	}
	.layers li.selected {
		background: linear-gradient(225deg, #ddd 4px, #576472 5px);
	}
	.layers li > button {
		width: 20px;
	}
	.cell {
		display: grid;
		place-items: center;
		width: 22px;
		height: 100%;
		border: solid #2e2e2e;
		border-width: 0 1px;
	}
	.layers li i {
		width: 5px;
		height: 100%;
		border-right: 1px solid #2e2e2e;
	}
	.layers .cell + i + button {
		margin-right: 2px;
	}
	.name {
		flex: 1;
		padding-left: 6px;
		font: 13px/16px 'Liberation Serif', serif;
	}
	.target {
		display: flex;
		align-items: center;
		gap: 6px;
		width: 35px;
		height: 100%;
		padding-left: 4px;
		border-left: 1px solid #2e2e2e;
	}
	footer {
		display: flex;
		align-items: center;
		flex: none;
		gap: 14px;
		height: 20px;
		padding: 0 28px 0 5px;
		color: #b8b8b8;
	}
	.count {
		flex: 1;
		color: #e0e0e0;
	}
	.look footer {
		padding-left: 12px;
		gap: 15px;
	}
	.fx em {
		color: #d8d8d8;
		font: italic 16px/18px 'Liberation Serif', serif;
	}
	.fx .small {
		padding-top: 8px;
	}
	.look li {
		height: 25px;
	}
	.look li > button:first-child {
		width: 25px;
		height: 100%;
		border-right: 1px solid #2e2e2e;
	}
	.look strong {
		margin-left: 47px;
	}
	.faint :global(svg) {
		opacity: 0.3;
	}
	.open {
		width: 22px;
		padding-left: 4px;
	}
	.chip {
		margin-left: 14px;
		padding: 1px;
		border: 1px solid #fff;
		background: #111;
		outline: 1px solid #222;
	}
	.value {
		margin-left: 4px;
	}

	.watermark {
		position: absolute;
		bottom: 22px;
		left: 13px;
		display: flex;
		align-items: baseline;
		gap: 8px;
		color: #fff;
		font: 24px/36px 'Noto Sans CJK SC', sans-serif;
		white-space: nowrap;
		-webkit-text-stroke: 9px #171717;
		paint-order: stroke fill;
		stroke-linejoin: round;
		pointer-events: none;
	}
	.watermark span {
		font-family: 'Liberation Sans', sans-serif;
		font-size: 27px;
	}
</style>
